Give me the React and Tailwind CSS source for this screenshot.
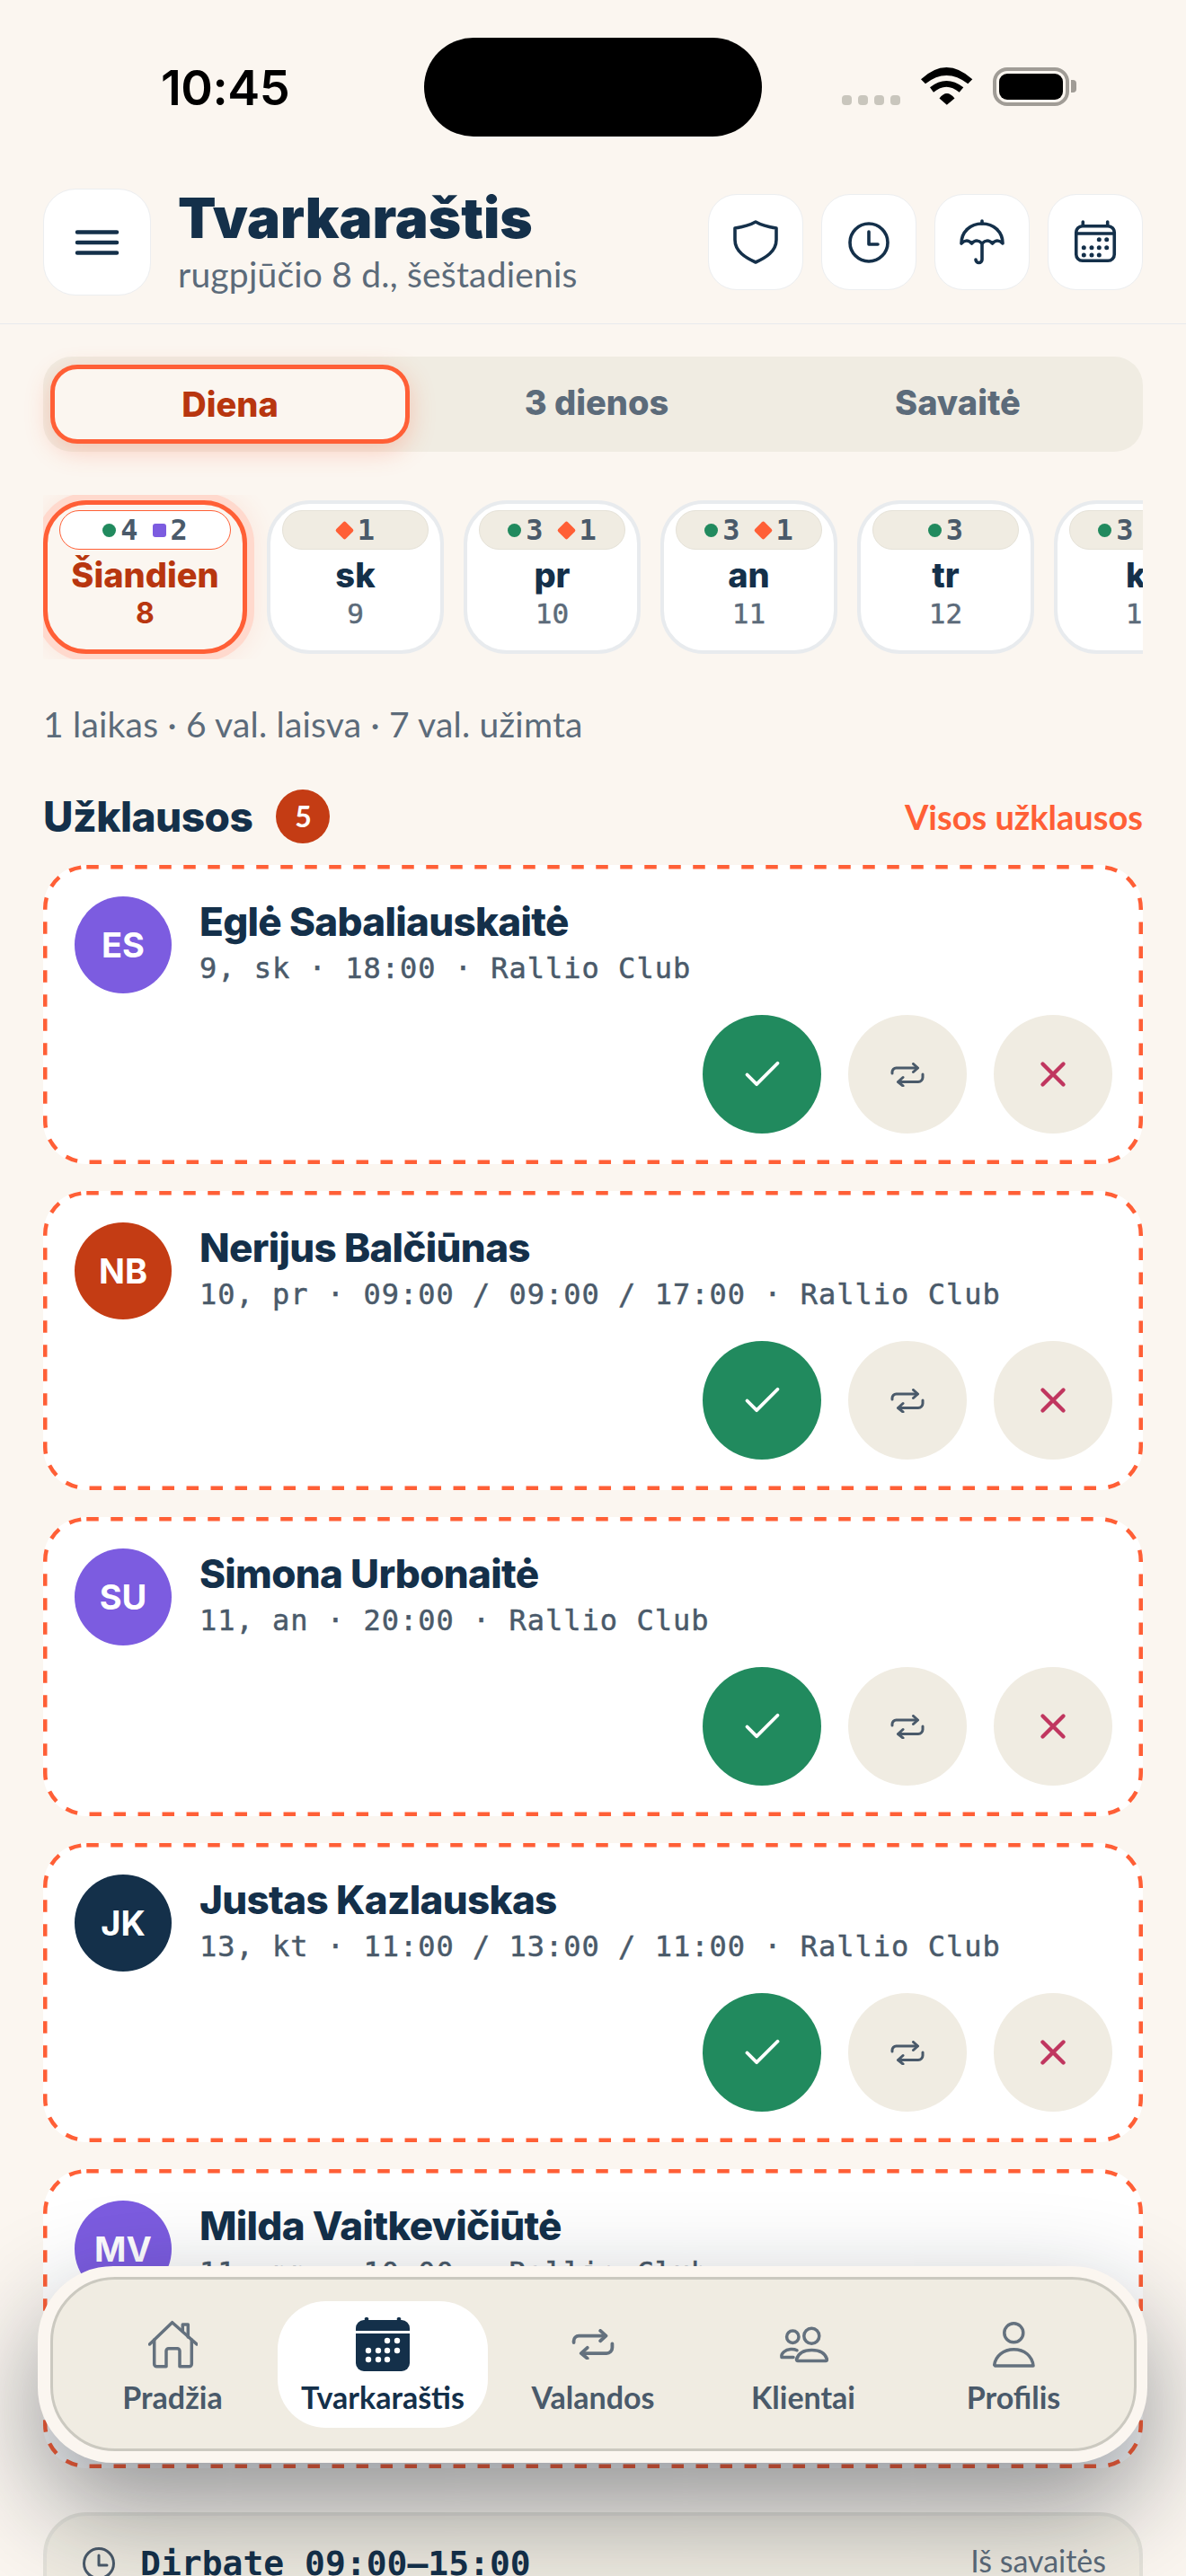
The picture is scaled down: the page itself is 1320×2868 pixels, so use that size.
import React from 'react';

const heading = "font-['Inter',sans-serif]";
const mono = "font-['DejaVu_Sans_Mono',monospace]";

const requests = [
  { initials: 'ES', color: 'bg-[#7c5ce0]', name: 'Eglė Sabaliauskaitė', info: '9, sk · 18:00 · Rallio Club' },
  { initials: 'NB', color: 'bg-[#c43c14]', name: 'Nerijus Balčiūnas', info: '10, pr · 09:00 / 09:00 / 17:00 · Rallio Club' },
  { initials: 'SU', color: 'bg-[#7c5ce0]', name: 'Simona Urbonaitė', info: '11, an · 20:00 · Rallio Club' },
  { initials: 'JK', color: 'bg-[#14304a]', name: 'Justas Kazlauskas', info: '13, kt · 11:00 / 13:00 / 11:00 · Rallio Club' },
  { initials: 'MV', color: 'bg-[#7c5ce0]', name: 'Milda Vaitkevičiūtė', info: '11, pn · 10:00 · Rallio Club' },
];

const days = [
  { label: 'sk', num: '9', marks: [['d', 1]] },
  { label: 'pr', num: '10', marks: [['g', 3], ['d', 1]] },
  { label: 'an', num: '11', marks: [['g', 3], ['d', 1]] },
  { label: 'tr', num: '12', marks: [['g', 3]] },
  { label: 'kt', num: '13', marks: [['g', 3], ['d', 1]] },
];

function Mark({ type, count }) {
  return (
    <span className="flex items-center gap-[5px]">
      {type === 'g' && <span className="w-[15px] h-[15px] rounded-full bg-[#218a5e]" />}
      {type === 'p' && <span className="w-[15px] h-[15px] rounded-[3px] bg-[#7c5ce0]" />}
      {type === 'd' && <span className="w-[15px] h-[15px] mx-[2px] rotate-45 rounded-[2px] bg-[#ff5f36]" />}
      <span className={`${mono} text-[32px] leading-none font-bold text-[#4a5a6a]`}>{count}</span>
    </span>
  );
}

function DayCard({ label, num, marks }) {
  return (
    <div className="w-[197px] h-[171px] shrink-0 rounded-[48px] border-4 border-[#e8ebee] bg-white px-[13px] pt-[7px] flex flex-col items-center">
      <div className="w-full h-[44px] rounded-[22px] bg-[#f0ece2] border border-[#e5e2d8] flex items-center justify-center gap-[16px]">
        {marks.map(([type, count]) => (
          <Mark key={type} type={type} count={count} />
        ))}
      </div>
      <div className={`${heading} mt-[6px] text-[38px] leading-[44px] font-extrabold text-[#14304a]`}>{label}</div>
      <div className={`${mono} mt-[1px] text-[31px] leading-[40px] [-webkit-text-stroke:0.5px_#5c6b7a] text-[#5c6b7a]`}>{num}</div>
    </div>
  );
}

function RepeatIcon({ className, stroke }) {
  return (
    <svg viewBox="0 0 38 27" fill="none" stroke={stroke} strokeWidth="3" strokeLinecap="round" strokeLinejoin="round" className={className}>
      <path d="M2 12v-1.500A4.500 4.500 0 0 1 6.500 6H30" />
      <path d="M25.500 1.500 30.500 6l-5 4.500" />
      <path d="M36 13v3.500a5 5 0 0 1-5 5H9" />
      <path d="M14 16.500 8.500 21.500l5.500 4.500" />
    </svg>
  );
}

function CalendarDots({ fill, r }) {
  const rows = [
    [23.7, [31.3, 39.7]],
    [32.7, [14.3, 23, 31.3, 39.7]],
    [41, [14.3, 23, 31.3]],
  ];
  return rows.flatMap(([y, xs]) => xs.map((x) => <circle key={`${x}-${y}`} cx={x} cy={y} r={r} fill={fill} />));
}

function RequestCard({ initials, color, name, info }) {
  return (
    <div className="relative h-[333px] rounded-[48px] bg-white pl-[35px] pr-[34px] pt-[35px]">
      <svg className="absolute inset-0 w-full h-full" viewBox="0 0 1224 333" fill="none">
        <rect x="2.250" y="2.250" width="1219.500" height="328.500" rx="46" stroke="#ff5f36" strokeWidth="4.500" strokeDasharray="13.500 13.500" />
      </svg>
      <div className="flex gap-[31px]">
        <div className={`${color} ${heading} w-[108px] h-[108px] rounded-full flex items-center justify-center text-white text-[38px] font-bold`}>
          {initials}
        </div>
        <div className="pt-[3px]">
          <div className={`${heading} text-[44px] leading-[50px] font-extrabold tracking-[-0.7px] text-[#14304a]`}>{name}</div>
          <div className={`${mono} mt-[7px] text-[32px] leading-[40px] tracking-[1px] [-webkit-text-stroke:0.5px_#4a5a6a] text-[#4a5a6a]`}>{info}</div>
        </div>
      </div>
      <div className="mt-[24px] flex justify-end gap-[30px]">
        <div className="w-[132px] h-[132px] rounded-full bg-[#218a5e] flex items-center justify-center">
          <svg width="51" height="51" viewBox="0 0 24 24" fill="none" stroke="#fff" strokeWidth="1.800" strokeLinecap="round" strokeLinejoin="round">
            <path d="M20 6 9 17l-5-5" />
          </svg>
        </div>
        <div className="w-[132px] h-[132px] rounded-full bg-[#f0ece2] flex items-center justify-center">
          <RepeatIcon className="w-[38px] h-[27px]" stroke="#4a5a6a" />
        </div>
        <div className="w-[132px] h-[132px] rounded-full bg-[#f0ece2] flex items-center justify-center">
          <svg width="46" height="46" viewBox="0 0 24 24" fill="none" stroke="#c0365f" strokeWidth="2.300" strokeLinecap="round" strokeLinejoin="round">
            <path d="M18 6 6 18M6 6l12 12" />
          </svg>
        </div>
      </div>
    </div>
  );
}

function HeaderButton({ children }) {
  return (
    <div className="w-[106px] h-[107px] rounded-[32px] bg-white border border-[#eceef0] flex items-center justify-center">
      <svg width="54" height="54" viewBox="0 0 54 54" fill="none" stroke="#14304a" strokeWidth="3.600" strokeLinecap="round" strokeLinejoin="round">
        {children}
      </svg>
    </div>
  );
}

function NavItem({ label, active, children }) {
  return (
    <div className={`w-[234px] h-[141px] flex flex-col items-center ${active ? 'bg-white rounded-[54px]' : ''}`}>
      <div className="h-[80px] pt-[15px] flex items-center justify-center">{children}</div>
      <div className={`mt-[8px] text-[34px] leading-[38px] font-bold ${active ? 'text-[#14304a]' : 'text-[#4a5a6a]'}`}>{label}</div>
    </div>
  );
}

export default function App() {
  return (
    <div className="relative h-[2868px] overflow-hidden bg-[#fbf6f0] font-['Lato',sans-serif]">
      {/* status bar */}
      <div className="relative h-[192px]">
        <div className="absolute left-[179px] top-[68px] font-['Inter',sans-serif] text-[54px] leading-[60px] font-semibold tracking-[-0.5px] text-black">10:45</div>
        <div className="absolute left-[472px] top-[42px] w-[376px] h-[110px] rounded-[55px] bg-black" />
        <div className="absolute left-[937px] top-[106px] flex gap-[7px]">
          {[0, 1, 2, 3].map((i) => (
            <span key={i} className="w-[11px] h-[11px] rounded-[4px] bg-[#c9c6bd]" />
          ))}
        </div>
        <svg className="absolute left-[1025px] top-[75px]" width="58" height="42" viewBox="0 0 58 42" fill="#000">
          <path d="M0 13.300Q28.300-13.300 57.300 13.300L52.300 18.300Q28.300-.3 5 18.300Z" />
          <path d="M10 22.300Q28.300 7.700 47.300 22.300L42.700 27.700Q28.300 15.700 14 27.700Z" />
          <path d="M20.500 34.500Q28.800 23.500 37.500 34.500L28.800 41.700Z" />
        </svg>
        <div className="absolute left-[1105px] top-[75px] w-[85px] h-[43px] rounded-[16px] border-[4px] border-[#a09c96] p-[3px]">
          <div className="w-full h-full rounded-[9px] bg-black" />
        </div>
        <div className="absolute left-[1192px] top-[89px] w-[6px] h-[14px] rounded-r-[4px] bg-[#a09c96]" />
      </div>

      {/* header */}
      <div className="h-[169px] border-b border-[#e8eaed] px-[48px] pt-[18px] flex items-start justify-between">
        <div className="flex gap-[30px]">
          <div className="w-[120px] h-[119px] rounded-[36px] bg-white border border-[#eceef0] flex items-center justify-center">
            <svg width="50" height="28" viewBox="0 0 50 28" fill="none" stroke="#14304a" strokeWidth="4.500" strokeLinecap="round">
              <path d="M3 2.500h44M3 14h44M3 25.500h44" />
            </svg>
          </div>
          <div>
            <div className={`${heading} text-[62px] leading-[66px] font-black text-[#14304a]`}>Tvarkaraštis</div>
            <div className="mt-[7px] text-[39px] leading-[44px] tracking-[0.2px] text-[#5c6b7a]">rugpjūčio 8 d., šeštadienis</div>
          </div>
        </div>
        <div className="mt-[6px] flex gap-[20px]">
          <HeaderButton>
            <path d="M27 4C33 7.500 43 10 50 11V24C50 37 38 44 27 49C16 44 4 37 4 24V11C11 10 21 7.500 27 4Z" />
          </HeaderButton>
          <HeaderButton>
            <circle cx="27" cy="27" r="21" />
            <path d="M27 15V29H37" />
          </HeaderButton>
          <HeaderButton>
            <path d="M4 28C4 15 14 6 27 6C40 6 50 15 50 28Q44 22 38.500 28Q33 22 27 28Q21 22 15.500 28Q10 22 4 28Z" />
            <path d="M27 28V46a3.500 3.500 0 0 1-7 0M27 3V6" />
          </HeaderButton>
          <HeaderButton>
            <rect x="5.750" y="8.750" width="42.500" height="38.500" rx="7" />
            <path d="M5.750 17H48.250M13.300 4V8M40.700 4V8" />
            <g stroke="none">
              <CalendarDots fill="#14304a" r="2.500" />
            </g>
          </HeaderButton>
        </div>
      </div>

      <div className="px-[48px]">
        {/* view tabs */}
        <div className="mt-[36px] h-[106px] rounded-[32px] bg-[#f0ece2] pl-[8px] pt-[9px] flex gap-[8px]">
          <div className={`${heading} w-[400px] h-[88px] rounded-[30px] border-[5px] border-[#ff5f36] bg-[#fbf6f0] shadow-[0_8px_28px_rgba(255,95,54,0.28)] flex items-center justify-center text-[38px] font-extrabold text-[#b8360f]`}>
            Diena
          </div>
          <div className={`${heading} w-[400px] h-[84px] flex items-center justify-center text-[38px] font-extrabold text-[#5c6b7a]`}>3 dienos</div>
          <div className={`${heading} w-[388px] h-[84px] flex items-center justify-center text-[38px] font-extrabold text-[#5c6b7a]`}>Savaitė</div>
        </div>

        {/* days strip */}
        <div className="mt-[48px] h-[183px] overflow-hidden pt-[6px] flex gap-[22px]">
          <div className="w-[227px] h-[171px] shrink-0 rounded-[48px] border-[5px] border-[#ff5f36] bg-[#fbf6f0] shadow-[0_0_0_8px_#ffd9cd,0_0_24px_12px_rgba(255,95,54,0.08)] px-[13px] pt-[6px] flex flex-col items-center">
            <div className="w-full h-[44px] rounded-[22px] bg-white border border-[#ff5f36] flex items-center justify-center gap-[16px]">
              <Mark type="g" count={4} />
              <Mark type="p" count={2} />
            </div>
            <div className={`${heading} mt-[6px] text-[38px] leading-[44px] font-extrabold text-[#b8360f]`}>Šiandien</div>
            <div className={`${heading} mt-[1px] text-[32px] leading-[40px] font-bold text-[#b8360f]`}>8</div>
          </div>
          {days.map((d) => (
            <DayCard key={d.label} {...d} />
          ))}
        </div>

        <div className="mt-[50px] text-[39px] leading-[44px] tracking-[0.2px] text-[#5c6b7a]">1 laikas · 6 val. laisva · 7 val. užimta</div>

        {/* requests */}
        <div className="mt-[51px] h-[60px] flex items-center justify-between">
          <div className="flex items-center gap-[26px]">
            <span className={`${heading} text-[46px] leading-none font-extrabold tracking-[-0.5px] text-[#14304a]`}>Užklausos</span>
            <span className="w-[60px] h-[60px] rounded-full bg-[#c43c14] flex items-center justify-center text-white text-[32px] font-bold">5</span>
          </div>
          <span className="text-[38px] font-bold text-[#ff5f36]">Visos užklausos</span>
        </div>
        <div className="mt-[24px] flex flex-col gap-[30px]">
          {requests.map((r) => (
            <RequestCard key={r.initials} {...r} />
          ))}
        </div>

        {/* working hours */}
        <div className="mt-[49px] h-[160px] rounded-[48px] border-4 border-[#e4e2da] bg-[#f0ece2] pl-[39px] pr-[37px] pt-[30px] flex items-start justify-between">
          <div className="flex items-center gap-[27px]">
            <svg width="38" height="38" viewBox="0 0 38 38" fill="none" stroke="#4a5a6a" strokeWidth="3" strokeLinecap="round" strokeLinejoin="round">
              <circle cx="19" cy="19" r="16.500" />
              <path d="M19 10V21H28" />
            </svg>
            <span className={`${mono} text-[38px] leading-[46px] font-bold text-[#14304a]`}>Dirbate 09:00–15:00</span>
          </div>
          <span className="text-[34px] leading-[40px] text-[#5c6b7a]">Iš savaitės</span>
        </div>
      </div>

      {/* floating nav */}
      <div className="absolute left-[42px] top-[2523px] w-[1235px] h-[219px] rounded-[84px] bg-[#fbf6f0] pl-[14px] pt-[12px] shadow-[0_50px_120px_rgba(15,25,35,0.45)]">
        <div className="w-[1209px] h-[194px] rounded-[72px] border-[3px] border-[#cbc9c0] bg-[#f0ece2] pl-[16px] pt-[24px] flex">
          <NavItem label="Pradžia">
            <svg width="55" height="55" viewBox="0 0 55 55" fill="none" stroke="#64717e" strokeWidth="3.500" strokeLinecap="round" strokeLinejoin="round">
              <path d="M1.500 28 26.700 3.700 54 28" />
              <path d="M6.700 23V50a2.700 2.700 0 0 0 2.700 2.700H20V35.500a2.700 2.700 0 0 1 2.700-2.700h9.600a2.700 2.700 0 0 1 2.700 2.700V52.700H45.600a2.700 2.700 0 0 0 2.700-2.700V23" />
              <path d="M38.300 13V6h6V20" />
            </svg>
          </NavItem>
          <NavItem label="Tvarkaraštis" active>
            <svg width="60" height="60" viewBox="0 0 60 60" fill="#14304a">
              <path d="M12 0a2 2 0 0 1 2 3h32a2 2 0 0 1 2-3 2 2 0 0 1 2 3h1a9 9 0 0 1 9 9v3H0v-3a9 9 0 0 1 9-9h1a2 2 0 0 1 2-3Z" />
              <path d="M0 18h60v33a9 9 0 0 1-9 9H9a9 9 0 0 1-9-9Z" />
              <g fill="#fff">
                {[[35, 26], [46, 26], [14, 37], [25, 37], [35, 37], [46, 37], [14, 47], [25, 47], [35, 47]].map(([x, y]) => (
                  <circle key={`${x}-${y}`} cx={x} cy={y} r="3.200" />
                ))}
              </g>
            </svg>
          </NavItem>
          <NavItem label="Valandos">
            <RepeatIcon className="w-[48px] h-[34px]" stroke="#64717e" />
          </NavItem>
          <NavItem label="Klientai">
            <svg width="56" height="42" viewBox="0 0 56 42" fill="none" stroke="#64717e" strokeWidth="3.500" strokeLinecap="round" strokeLinejoin="round">
              <circle cx="16.300" cy="12.700" r="6.700" />
              <circle cx="37.300" cy="11.700" r="8.500" />
              <path d="M22 39.500h31a1.500 1.500 0 0 0 1.500-1.700C52.500 31 46 27.500 37.500 27.500 29 27.500 22.500 31 20.500 37.800a1.500 1.500 0 0 0 1.500 1.700Z" />
              <path d="M17 35.500H4C3 31 8 27 14 26.500c2.500-.2 5 .2 7 1.200" />
            </svg>
          </NavItem>
          <NavItem label="Profilis">
            <svg width="51" height="54" viewBox="0 0 51 54" fill="none" stroke="#64717e" strokeWidth="3.500" strokeLinecap="round" strokeLinejoin="round">
              <circle cx="25.300" cy="14.300" r="10.500" />
              <path d="M4.500 51H47C46 40 37 32.700 25.300 32.700 14 32.700 5 40 3.700 50Z" />
            </svg>
          </NavItem>
        </div>
      </div>
    </div>
  );
}
